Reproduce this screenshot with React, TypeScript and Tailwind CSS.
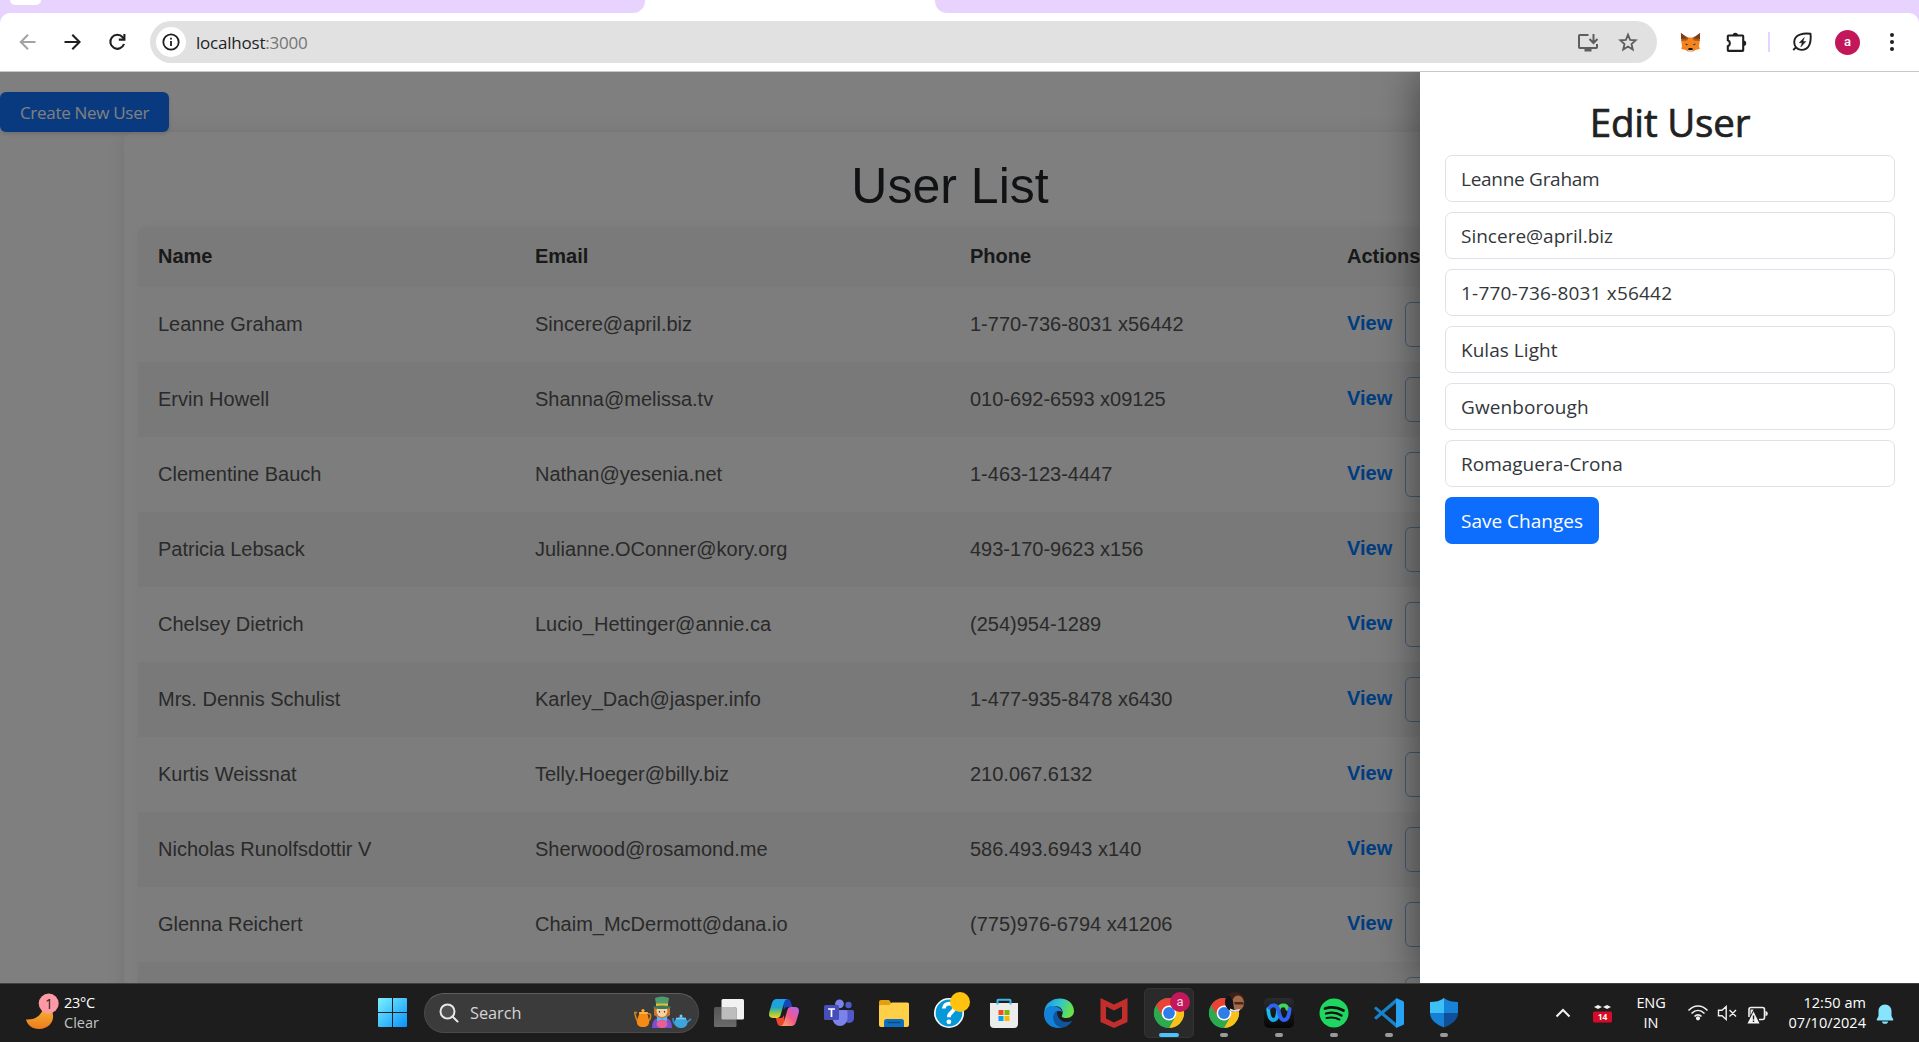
import React from "react";

const users = [
  ["Leanne Graham", "Sincere@april.biz", "1-770-736-8031 x56442"],
  ["Ervin Howell", "Shanna@melissa.tv", "010-692-6593 x09125"],
  ["Clementine Bauch", "Nathan@yesenia.net", "1-463-123-4447"],
  ["Patricia Lebsack", "Julianne.OConner@kory.org", "493-170-9623 x156"],
  ["Chelsey Dietrich", "Lucio_Hettinger@annie.ca", "(254)954-1289"],
  ["Mrs. Dennis Schulist", "Karley_Dach@jasper.info", "1-477-935-8478 x6430"],
  ["Kurtis Weissnat", "Telly.Hoeger@billy.biz", "210.067.6132"],
  ["Nicholas Runolfsdottir V", "Sherwood@rosamond.me", "586.493.6943 x140"],
  ["Glenna Reichert", "Chaim_McDermott@dana.io", "(775)976-6794 x41206"],
];

const fields = [
  { value: "Leanne Graham", track: "tracking-[-0.28px]" },
  { value: "Sincere@april.biz", track: "tracking-normal" },
  { value: "1-770-736-8031 x56442", track: "tracking-[0.2px]" },
  { value: "Kulas Light", track: "tracking-[0.04px]" },
  { value: "Gwenborough", track: "tracking-[0.09px]" },
  { value: "Romaguera-Crona", track: "tracking-normal" },
];

function TabStrip() {
  return (
    <div className="flex h-[13px] bg-white">
      <div className="flex h-[13px] w-[645px] rounded-br-[12px] bg-[#e8d3ff] pl-[10px]">
        <div className="h-[5px] w-[31px] rounded-b-[9px] bg-white" />
      </div>
      <div className="w-[290px]" />
      <div className="h-[13px] grow rounded-bl-[12px] bg-[#e8d3ff]" />
    </div>
  );
}

function Toolbar() {
  return (
    <div className="bg-[#e8d3ff]">
      <div className="flex h-[59px] items-center rounded-t-[10px] border-b border-[#c8c8c8] bg-white">
        <svg className="ml-[18px] h-5 w-5 shrink-0" viewBox="0 0 20 20" fill="none" stroke="#a3a3a3" strokeWidth="2">
          <path d="M17.5 10H3M10 2.8 2.8 10l7.2 7.2" />
        </svg>
        <svg className="ml-[25px] h-5 w-5 shrink-0" viewBox="0 0 20 20" fill="none" stroke="#1f1f1f" strokeWidth="2.1">
          <path d="M1.5 10h14.5M9.3 2.8l7.2 7.2-7.2 7.2" />
        </svg>
        <svg className="ml-[25px] h-5 w-5 shrink-0" viewBox="0 0 20 20" fill="none" stroke="#1f1f1f" strokeWidth="2.1">
          <path d="M16 12a7 7 0 1 1-1.300-6.700L16.400 7.200" />
          <path d="M16.400 2v5.600h-5.600" />
        </svg>
        <div className="ml-[22px] flex h-[42px] w-[1507px] items-center rounded-full bg-[#e1e1e1] pl-[6px]">
          <div className="flex h-[30px] w-[30px] items-center justify-center rounded-full bg-white">
            <svg className="h-[18px] w-[18px]" viewBox="0 0 18 18" fill="none" stroke="#1f1f1f" strokeWidth="1.8">
              <circle cx="9" cy="9" r="7.7" />
              <path d="M9 8v5M9 4.8v1.8" />
            </svg>
          </div>
          <div className="ml-[10px] pt-px font-['Open_Sans',sans-serif] text-[17px] tracking-[-0.22px] text-[#1f1f1f]">
            localhost<span className="text-[#757575]">:3000</span>
          </div>
          <svg className="ml-auto h-5 w-[22px]" viewBox="0 0 22 20" fill="none" stroke="#5f5f5f" strokeWidth="2">
            <path d="M11.5 3H2.8Q2 3 2 3.800v11.400q0 .8.8.8h16.400q.8 0 .8-.8V12M16.500 2v8.500M12.500 7l4 4 4-4" />
            <path d="M7.500 18h7" strokeWidth="3" />
          </svg>
          <svg className="ml-[19px] mr-[19px] h-5 w-5" viewBox="0 0 20 20" fill="none" stroke="#5f5f5f" strokeWidth="1.8">
            <path d="m10 2.600 2.100 5.200 5.600.5-4.200 3.700 1.300 5.500-4.800-2.900-4.800 2.900 1.300-5.500-4.200-3.700 5.600-.5z" />
          </svg>
        </div>
        <svg className="ml-[23px] h-[20px] w-[21px]" viewBox="0 0 21 20">
          <path d="M1 7.500 2 14l-.8 3 4.500 1 2 1.600h5.600l2-1.600 4.500-1-.8-3 1-6.500L13 5.500H8z" fill="#f5841f" />
          <path d="M.8 1 8.700 6 7 8.500 1.500 9zM20.200 1l-7.900 5L14 8.500l5.500.5z" fill="#a8581f" />
          <path d="M1 1v6l6-.8zM20 1v6l-6-.8z" fill="#763d16" />
          <path d="m5.500 11.500 3 1.300-2.500.4zM15.500 11.500l-3 1.300 2.500.4z" fill="#233447" />
          <path d="M8.400 16.500h4.200l.6 2.600H7.800z" fill="#d7c1b3" />
          <path d="M8.600 16h3.800l.4 2H8.200z" fill="#161616" />
        </svg>
        <svg className="ml-[24px] h-[22px] w-[22px]" viewBox="0 0 22 22">
          <path
            d="M3.500 4.500h14q.7 0 .7.700v14q0 .7-.7.700h-14q-.7 0-.7-.7v-4a3.200 3.200 0 0 0 0-6v-4q0-.7.700-.7z"
            fill="none"
            stroke="#1f1f1f"
            strokeWidth="2.1"
          />
          <path d="M7.600 4.400a2.700 2.700 0 0 1 5.400 0zM18.500 9.500a2.700 2.700 0 0 1 0 5.400z" fill="#1f1f1f" />
        </svg>
        <div className="ml-[21px] h-5 w-[2px] bg-[#e8d3ff]" />
        <svg className="ml-[22px] h-[20px] w-[20px]" viewBox="0 0 20 20" fill="none" stroke="#1f1f1f" strokeWidth="1.9">
          <path d="M18.500 1.800C12 1 2.400 2.200 2.200 10c0 4 2.500 7.800 7 7.900 8.500.1 10.200-8 9.300-16.100z" strokeLinejoin="round" />
          <path d="m4.500 15-3.300 3" />
          <path d="m12.300 5.500-5 5.200h2.900l-1.400 4.200 5-5.400h-2.900z" fill="#1f1f1f" strokeWidth=".5" />
        </svg>
        <div className="ml-[23px] flex h-[25px] w-[25px] items-center justify-center rounded-full bg-[#c2185b] pb-[1px] font-[Roboto,sans-serif] text-[13px] font-medium text-white">
          a
        </div>
        <svg className="ml-[27px] h-5 w-[10px]" viewBox="0 0 10 20" fill="#1f1f1f">
          <circle cx="5" cy="3" r="2" />
          <circle cx="5" cy="10" r="2" />
          <circle cx="5" cy="17" r="2" />
        </svg>
      </div>
    </div>
  );
}

const EditButton = () => <div className="h-[45px] w-[90px] rounded-[6px] border border-[#7fb5ee]" />;

function UserList() {
  return (
    <div className="h-full w-full overflow-hidden bg-white pt-5">
      <button className="relative z-10 block h-10 w-[169px] whitespace-nowrap rounded-[6px] bg-[#1274fe] pt-[2px] font-['Open_Sans',sans-serif] text-[17px] tracking-[-0.3px] text-white shadow-[0_2px_4px_rgba(0,0,0,0.15)]">
        Create New User
      </button>
      <div className="ml-[124px] h-[1100px] w-[1652px] rounded-[10px] bg-white px-[14px] pt-[27px] font-['Liberation_Sans',Arial,sans-serif] shadow-[0_0_20px_rgba(0,0,0,0.1)]">
        <h1 className="h-[68px] text-center text-[50px] leading-[55px] text-[#212529]">User List</h1>
        <div className="rounded-t-[8px] shadow-[0_0_10px_rgba(0,0,0,0.05)]">
          <div className="flex h-[60px] items-center rounded-t-[6px] bg-[#f4f4f4] pb-[2px] pl-[20px] text-[20px] font-bold text-[#333]">
            <div className="w-[377px]">Name</div>
            <div className="w-[435px]">Email</div>
            <div className="w-[377px]">Phone</div>
            <div>Actions</div>
          </div>
          {users.map(([name, email, phone], i) => (
            <div
              key={name}
              className={
                "flex h-[75px] items-center pl-[20px] text-[20px] text-[#555] " +
                (i % 2 === 0 ? "bg-[#fafafa]" : "bg-[#f2f2f2]")
              }
            >
              <div className="w-[377px] pb-px">{name}</div>
              <div className="w-[435px] pb-px">{email}</div>
              <div className="w-[377px] pb-px">{phone}</div>
              <div className="w-[58px] pb-[4px] font-bold text-[#007bff]">View</div>
              <EditButton />
            </div>
          ))}
          <div className="flex h-[75px] items-center bg-[#f2f2f2] pl-[1267px]">
            <EditButton />
          </div>
        </div>
      </div>
    </div>
  );
}

function EditPanel() {
  return (
    <div className="absolute right-[-1px] top-0 h-full w-[500px] bg-white px-[25px] pt-[26px] font-['Open_Sans',sans-serif] shadow-[0_0_40px_rgba(0,0,0,0.5)]">
      <h2 className="h-[57px] text-center text-[38.5px] font-medium leading-[49px] tracking-[-0.2px] text-[#212121] [-webkit-text-stroke:0.7px_#212121]">
        Edit User
      </h2>
      <div className="flex flex-col gap-[10px]">
        {fields.map((f) => (
          <div
            key={f.value}
            className={"flex h-[47px] items-center rounded-[7px] border border-[#dee2e6] px-[15px] pt-px text-[19px] text-[#33373b] " + f.track}
          >
            {f.value}
          </div>
        ))}
        <button className="h-[47px] w-[154px] whitespace-nowrap rounded-[7px] bg-[#0d6efd] pt-px text-[19px] text-white">
          Save Changes
        </button>
      </div>
    </div>
  );
}

function ChromeLogo({ children }: { children?: React.ReactNode }) {
  return (
    <svg className="h-[38px] w-[38px] overflow-visible" viewBox="-15 -19 38 38">
      <circle r="15" fill="#34a853" />
      <path d="M-13-7.5A15 15 0 0 1 13-7.5L0-7.2-6.5 3.6z" fill="#ea4335" />
      <path d="M13-7.5A15 15 0 0 1 0 15l6.500-11.200L0-7.500z" fill="#fbc116" />
      <path d="M-13-7.5-6.5 3.800 0 7.500 4 6 0 15A15 15 0 0 1-13-7.500z" fill="#2da94f" />
      <circle r="7.4" fill="#fff" />
      <circle r="5.9" fill="#2f7de9" />
      {children}
    </svg>
  );
}

function Cell({ children, state }: { children: React.ReactNode; state?: "open" | "active" }) {
  return (
    <div className="flex w-[55px] justify-center">
      <div
        className={
          "relative flex h-[50px] w-[50px] items-center justify-center rounded-[5px] " +
          (state === "active" ? "border border-[#343434] bg-[#2a2a2a]" : "")
        }
      >
        {children}
        {state === "active" && <div className="absolute bottom-0 left-[14px] h-1 w-5 rounded-full bg-[#4cc2ff]" />}
        {state === "open" && <div className="absolute bottom-[1px] left-[21px] h-1 w-2 rounded-full bg-[#9a9a9a]" />}
      </div>
    </div>
  );
}

const big = "h-[30px] w-[30px] overflow-visible";

function Apps() {
  return (
    <div className="ml-[2px] flex">
      <Cell>
        <svg className={big} viewBox="0 0 30 30">
          <defs>
            <linearGradient id="tv" x1="0" y1="0" x2="0" y2="1">
              <stop stopColor="#555" />
              <stop offset="1" stopColor="#6b6b6b" />
            </linearGradient>
          </defs>
          <rect x="7.5" y="1" width="22.5" height="20.5" rx="1.5" fill="#f2f2f2" />
          <rect y="9" width="22.5" height="20" rx="1.5" fill="url(#tv)" />
          <path d="M7.500 9h13.500q1.500 0 1.500 1.500v11H9q-1.500 0-1.500-1.500z" fill="#bdbdbd" />
        </svg>
      </Cell>
      <Cell>
        <svg className={big} viewBox="0 0 30 30">
          <defs>
            <linearGradient id="cpA" x1="0" y1="0" x2="0" y2="1">
              <stop stopColor="#1ba0f2" />
              <stop offset=".45" stopColor="#20a5c9" />
              <stop offset=".75" stopColor="#8fca4a" />
              <stop offset="1" stopColor="#f5d327" />
            </linearGradient>
            <linearGradient id="cpB" x1="1" y1="0" x2="0" y2="1">
              <stop stopColor="#b065f0" />
              <stop offset=".5" stopColor="#f2588c" />
              <stop offset="1" stopColor="#ffae5b" />
            </linearGradient>
          </defs>
          <path d="M14 1h4.500q2.500 0 3.300 3l1.600 5h-5q-2.500 0-3.500 3z" fill="#1645b8" />
          <path d="M16 28h-5q-2 0-2.800-3l-1.400-5h5q2.200 0 3.200-3z" fill="#e8482e" />
          <path d="M7.500 1H18q-2 .4-2.800 3.200L11.600 17q-.8 3-3.600 3H4Q-1 20 .3 14L3 5Q4.300 1 7.500 1z" fill="url(#cpA)" />
          <path d="M22.500 28H12q2-.4 2.800-3.200L18.400 12q.8-3 3.600-3h4q5 0 3.700 6L27 24q-1.300 4-4.500 4z" fill="url(#cpB)" />
        </svg>
      </Cell>
      <Cell>
        <svg className={big} viewBox="0 0 30 30">
          <circle cx="24.500" cy="7" r="3.200" fill="#5059c9" />
          <path d="M20 12h8.500q1.500 0 1.500 1.500V20a5 5 0 0 1-9 3z" fill="#5059c9" />
          <circle cx="15.500" cy="5.800" r="4.400" fill="#7b83eb" />
          <path d="M9 12h13q1.500 0 1.500 1.500v7a7.500 7.500 0 0 1-15 0z" fill="#7b83eb" />
          <rect y="7" width="15" height="15" rx="1.500" fill="#464eb8" />
          <path d="M4 11h7M7.500 11v8" stroke="#fff" strokeWidth="1.700" />
        </svg>
      </Cell>
      <Cell>
        <svg className={big} viewBox="0 0 30 30">
          <path d="M0 4q0-2 2-2h8l3 4v6H0z" fill="#e0a010" />
          <path d="M0 8.500q0-1.500 1.500-1.500H10l3-2.500h15.500q1.500 0 1.500 1.500v21q0 2-2 2H2q-2 0-2-2z" fill="#ffcf48" />
          <path d="M5 29v-5.500q0-2.500 2.500-2.500h15q2.500 0 2.500 2.500V29z" fill="#0e6fc0" />
          <path d="M8.500 24.500h13" stroke="#0a4a87" strokeWidth="1.500" />
        </svg>
      </Cell>
      <Cell>
        <svg className={big} viewBox="0 0 30 30">
          <circle cx="15" cy="15" r="14.200" fill="#0798d8" stroke="#fff" strokeWidth="1.600" />
          <path d="M9.800 10.500c.4-6.500 10.700-6.500 10.400-.3-.2 4.200-5.500 4-5.400 9" fill="none" stroke="#fff" strokeWidth="3.800" />
          <circle cx="14.900" cy="23.800" r="2.400" fill="#fff" />
          <circle cx="26" cy="4" r="10" fill="#ffc20e" />
        </svg>
      </Cell>
      <Cell>
        <svg className={big} viewBox="0 0 30 30">
          <path d="M8.500 7V2.500q0-.8.800-.8h11.400q.8 0 .8.800V7" fill="none" stroke="#3db5ec" strokeWidth="2" />
          <path d="M1 5h28v21q0 4-4 4H5q-4 0-4-4z" fill="#ececec" />
          <path d="M8.500 5v1.500M21.500 5v1.500" stroke="#3db5ec" strokeWidth="2" />
          <path d="M9.500 12h5v5h-5z" fill="#f25022" />
          <path d="M15.500 12h5v5h-5z" fill="#7fba00" />
          <path d="M9.500 18h5v5h-5z" fill="#00a4ef" />
          <path d="M15.500 18h5v5h-5z" fill="#ffb900" />
        </svg>
      </Cell>
      <Cell>
        <svg className={big} viewBox="0 0 30 30">
          <defs>
            <linearGradient id="edA" x1="0" y1="0" x2="1" y2=".3">
              <stop stopColor="#1a8fdc" />
              <stop offset=".5" stopColor="#2fc0d8" />
              <stop offset="1" stopColor="#66e24b" />
            </linearGradient>
          </defs>
          <path d="M1 10C6-3 29-3 30 13c0 4-3 7-7.500 7-3.500 0-5.500-1-4.500-2.500C20 14 18 8 11 8 6 8 2 11 0 15z" fill="url(#edA)" />
          <path d="M0 15C1 9 6 7.500 10 8c5 .5 8 4 8 6-4-3-9 1-8 6 .6 5 5 9.500 9 9.300C9 32-.5 26 0 15z" fill="#1383da" />
          <path d="M13 12.500c-4 3-4.500 7.500-3 11 2 5 7 6.500 10 5.700 4-1 7-4 8.300-6.500-8 4-16-1-15.300-10.200z" fill="#0f559f" />
        </svg>
      </Cell>
      <Cell>
        <svg className={big} viewBox="0 0 30 30">
          <path
            d="M1.500 0 15 6.500 28.500 0v24L15 30 1.500 24zM7 8.500v12l8 4 8-4v-12l-8 4z"
            fill="#c22e2b"
            fillRule="evenodd"
          />
        </svg>
      </Cell>
      <Cell state="active">
        <div className="pl-[8px]">
          <ChromeLogo>
            <circle cx="11" cy="-11" r="10" fill="#c2185b" />
            <text x="11" y="-7" textAnchor="middle" fontSize="13" fill="#f4d5e1" fontFamily="Roboto">
              a
            </text>
          </ChromeLogo>
        </div>
      </Cell>
      <Cell state="open">
        <div className="pl-[8px]">
          <ChromeLogo>
            <clipPath id="face">
              <circle cx="11" cy="-11" r="10" />
            </clipPath>
            <g clipPath="url(#face)">
              <path d="M0-22h22v22H0z" fill="#3a2119" />
              <ellipse cx="14" cy="-10" rx="6" ry="7.500" fill="#a3694a" />
              <path d="M0-18l6 1 3 5 1 8-6 3-5-6z" fill="#12131b" />
              <path d="M10-11h9l1 2.500h-9z" fill="#4a2a1d" />
              <path d="M6-4.500l4 1.500 6-1-1 4H6z" fill="#dfe2e6" />
            </g>
          </ChromeLogo>
        </div>
      </Cell>
      <Cell state="open">
        <svg className={big} viewBox="0 0 30 30">
          <defs>
            <linearGradient id="wxBg" x1="0" y1="0" x2="0" y2="1">
              <stop stopColor="#2b2c2e" />
              <stop offset="1" stopColor="#050505" />
            </linearGradient>
            <linearGradient id="wxL" x1="0" y1="0" x2="1" y2="1">
              <stop stopColor="#1bc3ee" />
              <stop offset="1" stopColor="#12a2e8" />
            </linearGradient>
          </defs>
          <rect width="30" height="30" rx="5" fill="url(#wxBg)" />
          <g fill="none" strokeWidth="3.800" strokeLinecap="round">
            <path d="M13.500 18.500C14 12 14.500 7.500 19 7.300c3-.1 4.200 1.700 4.300 3.700" stroke="#3fd35f" />
            <path d="M4.200 11c.3 6 2 11 5.300 11 3 0 4.200-4 4.700-8" stroke="url(#wxL)" />
            <path d="M5.500 9.500c3-3.500 7.500-3 9 3 1.300 5.500 2.500 9.500 5.500 9.500 3.500 0 5.200-5 5.600-11" stroke="#2f62f0" />
          </g>
        </svg>
      </Cell>
      <Cell state="open">
        <svg className={big} viewBox="0 0 30 30">
          <circle cx="15" cy="15" r="14.500" fill="#1ed760" />
          <g fill="none" stroke="#111" strokeLinecap="round">
            <path d="M6 10.500c6-2 13-1 18.500 2" strokeWidth="2.700" />
            <path d="M7 15.500c5-1.500 11-1 15.500 2" strokeWidth="2.300" />
            <path d="M7.500 20c4.500-1 9-.7 13 1.600" strokeWidth="1.900" />
          </g>
        </svg>
      </Cell>
      <Cell state="open">
        <svg className={big} viewBox="0 0 30 30">
          <path d="M2 8.500 22 25v4.500L.6 11Q0 10.500.5 9.800z" fill="#1783c9" />
          <path d="M2.200 21.800 22 5V.5L.6 19q-.5.600 0 1.200z" fill="#1583ca" />
          <path d="m22 0 7 3q1 .5 1 1.500v21q0 1-1 1.500l-7 3z" fill="#27a3f3" />
          <path d="M22 8v14L13 15z" fill="#1d1d1d" />
        </svg>
      </Cell>
      <Cell state="open">
        <svg className={big} viewBox="0 0 30 30">
          <path d="M15 0c4 3 9 4 14 4v11H15z" fill="#1683d8" />
          <path d="M15 0C11 3 6 4 1 4v11h14z" fill="#3dc0f5" />
          <path d="M1 15h14v14.500C6 26 1 21 1 15z" fill="#1580d5" />
          <path d="M29 15H15v14.500C24 26 29 21 29 15z" fill="#114f99" />
        </svg>
      </Cell>
    </div>
  );
}

function Taskbar() {
  return (
    <div className="flex h-[59px] items-center border-t border-[#404040] bg-[#1d1d1d] pb-px font-['Open_Sans',sans-serif] text-[14.5px] text-white">
      <svg className="ml-[24px] mt-[-4px] h-[40px] w-[36px]" viewBox="24 988 36 40">
        <defs>
          <linearGradient id="moon" x1="0" y1="0" x2="0" y2="1">
            <stop stopColor="#f6c33c" />
            <stop offset="1" stopColor="#ee7a1c" />
          </linearGradient>
        </defs>
        <path d="M26 1016.500c10 1 19-6 17-17 15 6 13 26-4 26.500-7 0-11.500-4-13-9.500z" fill="url(#moon)" />
        <circle cx="48.700" cy="1000.500" r="10" fill="#ff99a4" />
        <text x="49" y="1006" textAnchor="middle" fontSize="14" fill="#222" fontFamily="Open Sans">
          1
        </text>
      </svg>
      <div className="ml-[4px] w-[80px] leading-[20px]">
        <div className="tracking-[-0.3px]">23°C</div>
        <div className="text-[#c4c4c4]">Clear</div>
      </div>
      <svg className="ml-[234px] h-[29px] w-[29px]" viewBox="0 0 29 29">
        <defs>
          <linearGradient id="win" gradientUnits="userSpaceOnUse" x1="0" y1="0" x2="29" y2="29">
            <stop stopColor="#7df0fd" />
            <stop offset="1" stopColor="#0693fb" />
          </linearGradient>
        </defs>
        <path d="M1 0h13v14H0V1q0-1 1-1zM15 0h13q1 0 1 1v13H15zM0 15h14v14H1q-1 0-1-1zM15 15h14v13q0 1-1 1H15z" fill="url(#win)" />
      </svg>
      <div className="ml-[17px] flex h-[40px] w-[275px] items-center rounded-full border border-[#4a4a4a] border-t-[#5e5e5e] bg-[#3b3b3b]">
        <svg className="ml-[14px] h-[20px] w-[20px]" viewBox="0 0 20 20" fill="none" stroke="#e8e8e8" strokeWidth="2">
          <circle cx="8.500" cy="8.500" r="7" fill="#505050" />
          <path d="m13.500 13.500 5 5" strokeLinecap="round" />
        </svg>
        <div className="ml-[11px] pt-px text-[16.3px] text-[#d5d5d5]">Search</div>
        <svg className="ml-auto mr-[6px] mt-px h-[34px] w-[58px]" viewBox="0 0 58 34">
          <path d="M3 17q-3-2-2 1c1 5 2 6 3 8M14 18c4-2 3 6 0 7" fill="none" stroke="#d98316" strokeWidth="1.500" />
          <path d="M6 16h7l2 8q1 6-4 7H7q-5-1-4-7z" fill="#f58a14" />
          <circle cx="9" cy="14.500" r="1.600" fill="#ffb52b" />
          <path d="M5 17h9" stroke="#ffc04a" strokeWidth="1.500" />
          <path d="M18 32q0-9 6-10h8q6 1 6 10z" fill="#7d4fd0" />
          <path d="M20 11h16v8q-8 7-16 0z" fill="#c9752c" />
          <ellipse cx="28" cy="15" rx="5.500" ry="6" fill="#f8d0a5" />
          <path d="M21 2q7-3 14 0l-1.500 9h-11z" fill="#4d9c6f" />
          <path d="M22 7.500h12v2.800H22z" fill="#f0b733" />
          <ellipse cx="28" cy="11.300" rx="9" ry="1.800" fill="#347d58" />
          <path d="M25.500 15v1.500M30.500 15v1.500" stroke="#333" strokeWidth="1.200" />
          <path d="m23 20.500 5 2 5-2v5l-5-2-5 2z" fill="#55baf2" />
          <ellipse cx="28" cy="28" rx="5.500" ry="4" fill="#ea5f91" />
          <path d="M39 22q0 6 4 7M52 27l5-4" fill="none" stroke="#2b8fc9" strokeWidth="1.800" />
          <ellipse cx="47" cy="26.500" rx="6.500" ry="5.500" fill="#3ca6dc" />
          <circle cx="47" cy="20" r="1.500" fill="#76cdf3" />
          <path d="M42 22.500h10" stroke="#79cbef" strokeWidth="1.500" />
        </svg>
      </div>
      <Apps />
      <svg className="ml-[84px] h-[10px] w-[16px]" viewBox="0 0 16 10" fill="none" stroke="#f3f3f3" strokeWidth="2">
        <path d="m1.500 8.500 6.500-6.500 6.500 6.500" />
      </svg>
      <svg className="ml-[22px] mt-[2px] h-[19px] w-[19px]" viewBox="0 0 19 19">
        <path d="m1 3 4-2 4 2-4 2zM10 3l4-2 4 2-4 2z" fill="#f2f2f2" />
        <rect y="7.500" width="19" height="11" rx="1.500" fill="#d80a26" />
        <text x="9.500" y="16.200" textAnchor="middle" fontSize="8.500" fontWeight="700" fill="#fff" fontFamily="Open Sans">
          14
        </text>
      </svg>
      <div className="ml-[20px] w-[38px] text-center leading-[20px] tracking-[-0.1px]">
        <div>ENG</div>
        <div>IN</div>
      </div>
      <svg className="ml-[17px] h-[17px] w-[22px]" viewBox="0 0 22 17" fill="none" stroke="#f0f0f0" strokeWidth="1.600">
        <path d="M1.500 6.500c5.500-6 13.500-6 19 0M4.500 9.500c4-4 9-4 13 0M7.500 12.500c2-2.200 5-2.200 7 0" />
        <circle cx="11" cy="14.300" r="1.300" fill="#f0f0f0" />
      </svg>
      <svg className="ml-[8px] h-[16px] w-[21px]" viewBox="0 0 21 16" fill="none" stroke="#f0f0f0" strokeWidth="1.400">
        <path d="M1.500 5.200H5l4.200-3.700v13L5 10.800H1.500zM12.500 5l6.500 6.500M19 5l-6.500 6.500" />
      </svg>
      <svg className="ml-[9px] mt-[4px] h-[18px] w-[22px]" viewBox="0 0 22 18">
        <path d="M2 11V3.500Q2 1.500 4 1.500h11.500q2 0 2 2v8q0 2-2 2H12" fill="none" stroke="#f0f0f0" strokeWidth="1.600" />
        <path d="M18.500 5q2.300 0 2.300 2.500T18.500 10zM3.500 3.500h3l-3 6z" fill="#f0f0f0" />
        <path d="m6.500 5.500 6 12h-12z" fill="#f5f5f5" />
        <path d="M6.500 9.500v4M6.500 14.500v1.500" stroke="#1d1d1d" strokeWidth="1.400" />
      </svg>
      <div className="ml-auto mr-[10px] text-right leading-[20px] tracking-[0.05px]">
        <div>12:50 am</div>
        <div>07/10/2024</div>
      </div>
      <svg className="mr-[25px] mt-[2px] h-[20px] w-[18px]" viewBox="0 0 18 20" fill="#86e4fd">
        <path d="M9 .5c4 0 6.500 3 6.500 6.500v5l1.800 3.500q.2 1-.8 1h-15q-1 0-.8-1L2.500 12V7C2.500 3.500 5 .5 9 .5z" />
        <path d="M6 17.500h6a3 2.300 0 0 1-6 0z" />
      </svg>
    </div>
  );
}

export default function App() {
  return (
    <div className="flex h-[1042px] w-[1919px] flex-col overflow-hidden">
      <TabStrip />
      <Toolbar />
      <div className="relative h-[911px] overflow-hidden">
        <UserList />
        <div className="absolute inset-0 z-20 bg-black/50">
          <EditPanel />
        </div>
      </div>
      <Taskbar />
    </div>
  );
}
